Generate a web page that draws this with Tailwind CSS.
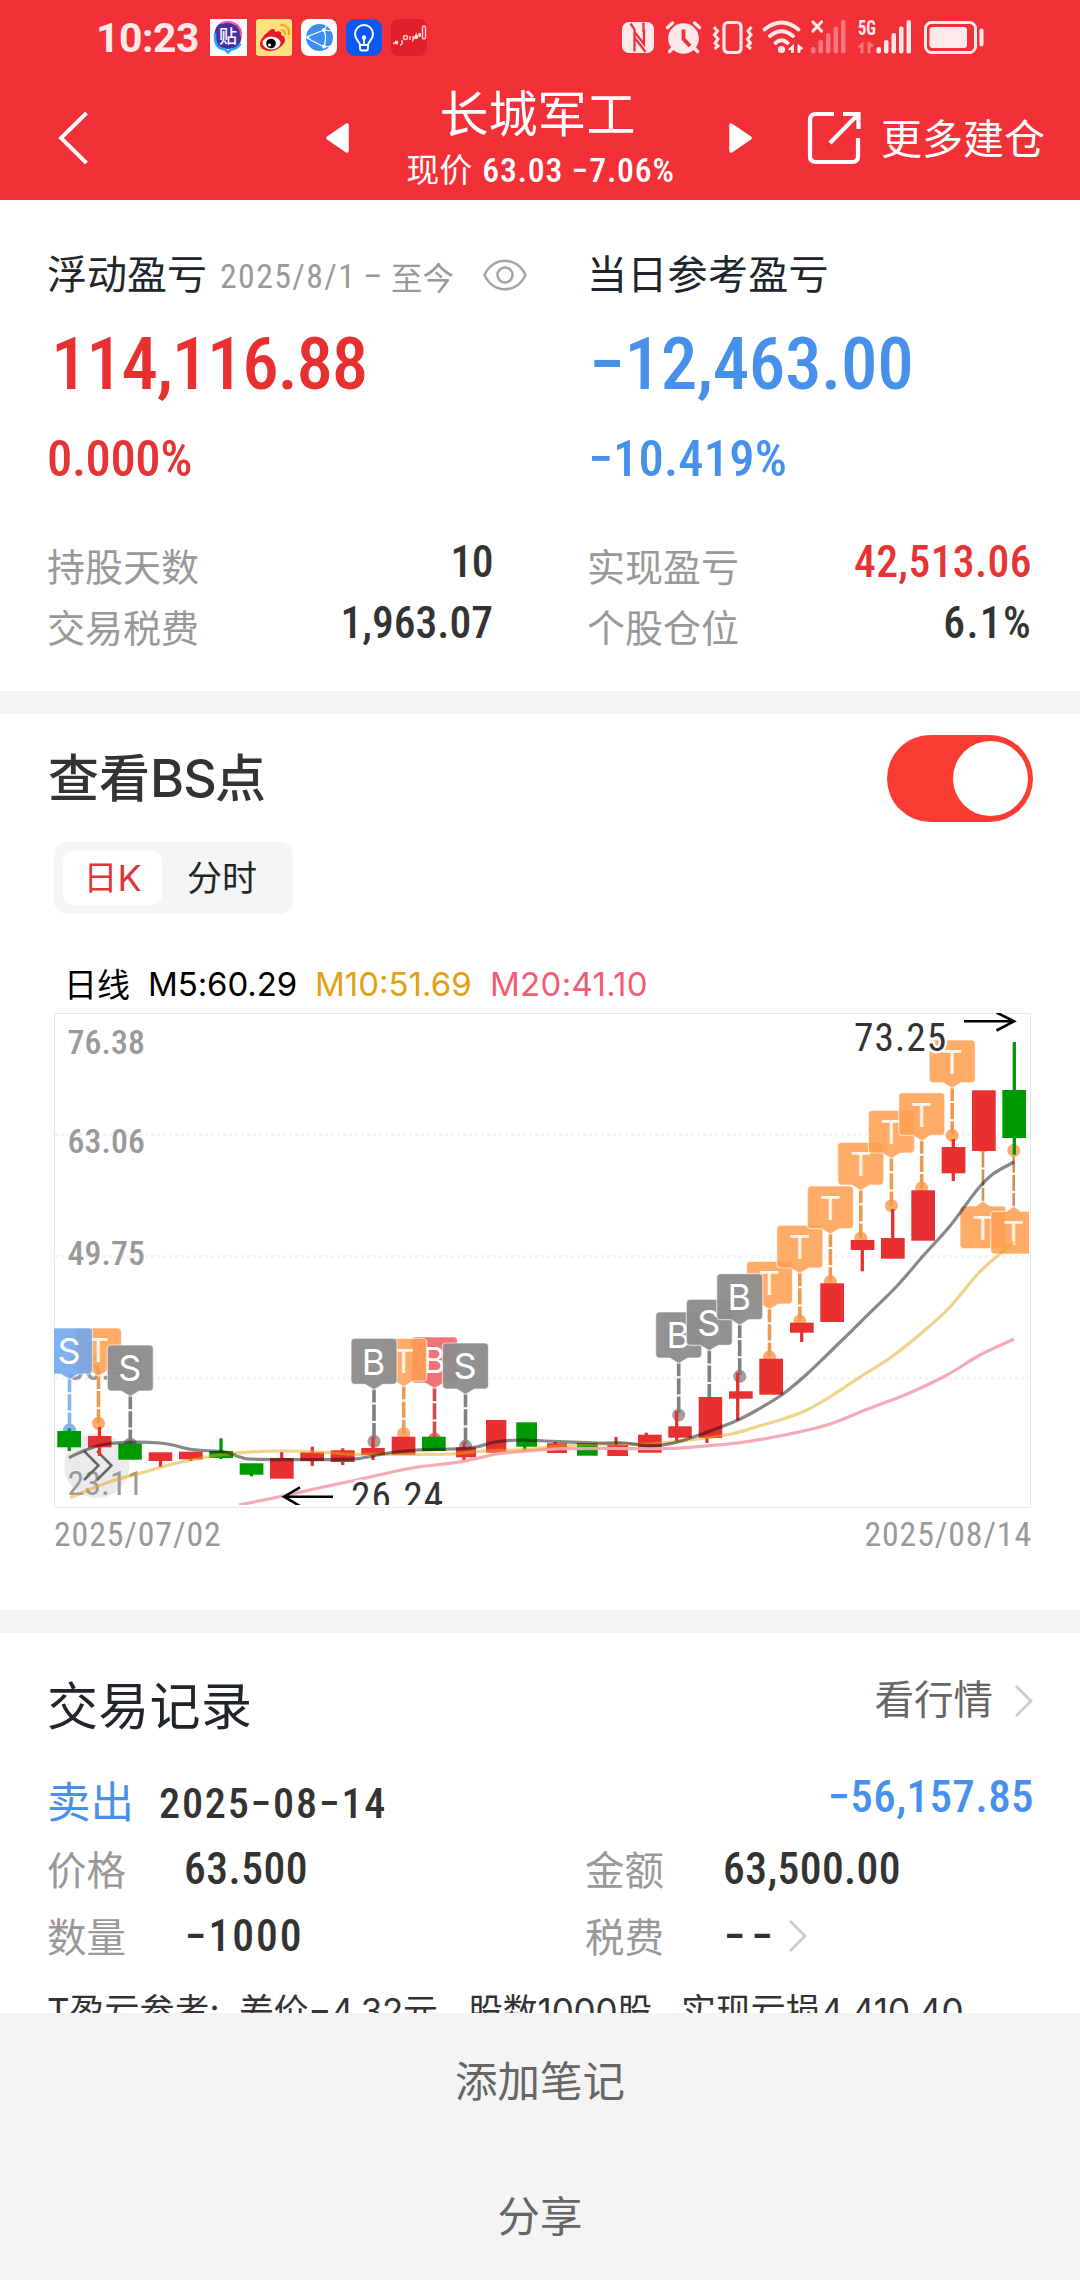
<!DOCTYPE html>
<html lang="zh-CN">
<head>
<meta charset="utf-8">
<title>长城军工</title>
<script src="https://cdn.jsdelivr.net/npm/@tailwindcss/browser@4"></script>
</head>
<body class="w-[1080px] h-[2280px] overflow-hidden bg-white font-['Noto_Sans_CJK_SC',sans-serif] text-[#333333]">
<div class="flex flex-col w-[1080px] h-[2280px] overflow-hidden">

  <!-- header -->
  <header class="h-[200px] shrink-0 bg-[#f13038] text-white">
    <div class="flex h-[75px] items-center pl-[96px] pr-[94px]">
      <span class="h-[75px] leading-[76px] w-[114px] text-[40.8px] font-bold tracking-[-0.4px] font-['Roboto',sans-serif] text-[#ffe8e9]">10:23</span>
      <div class="flex gap-[9px]">
        <svg width="37" height="37" viewBox="0 0 37 37"><rect width="37" height="37" fill="#fff"/><path d="M18 3c9 0 13.500 4 13.500 13.500S27 30 18 30 4.500 26 4.500 16.500 9 3 18 3z" fill="#4a2f9e"/><path d="M5 14v4c0 8 4 12 10 12.500l3 3 3-3c5-.5 8-3 9.500-6" fill="none" stroke="#25a9f5" stroke-width="2.500"/><path d="M11 4.500c6-3 21-2 20 13" fill="none" stroke="#ee5b8f" stroke-width="2"/><text x="18" y="23.500" font-size="18" fill="#fff" text-anchor="middle" font-weight="500">贴</text></svg>
        <svg width="36" height="37" viewBox="0 0 36 37"><rect width="36" height="37" rx="3" fill="#ffe07c"/><path d="M12 13c4-5 8-3 7 0 5-2 7 0 6 3 4 1 5 5 3 8-3 5-9 8-14 8-6 0-10-3-10-7 0-4 4-9 8-12z" fill="#e6162d"/><ellipse cx="15.500" cy="24" rx="9" ry="6.500" fill="#fff"/><circle cx="15" cy="24.500" r="4.800" fill="#000"/><circle cx="13.500" cy="26" r="1.500" fill="#fff"/><path d="M24 6c6-1 10 4 9 10M25 11c3 0 4.500 2 4 5" fill="none" stroke="#f5a623" stroke-width="2.200"/></svg>
        <svg width="36" height="37" viewBox="0 0 36 37"><rect width="36" height="37" rx="8" fill="#fff"/><circle cx="18.500" cy="18.500" r="13.500" fill="#3d8ef0"/><path d="M5 18l18-7 3-5M23 11c2 5 2 11 0 17M6 19l17 9 8-1M23 11l8 1" fill="none" stroke="#fff" stroke-width="1.200"/><circle cx="23" cy="11" r="2" fill="#fff"/><circle cx="23" cy="27.500" r="2" fill="#fff"/><circle cx="7" cy="18.500" r="1.600" fill="#fff"/></svg>
        <svg width="36" height="37" viewBox="0 0 36 37"><rect width="36" height="37" rx="9" fill="#0a58f5"/><path d="M14 26c0-3-5-5-5-11a9 9 0 0 1 18 0c0 6-5 8-5 11z" fill="none" stroke="#fff" stroke-width="2"/><path d="M14 26v3.500q0 2 2 2h4q2 0 2-2V26M18 18v8" fill="none" stroke="#fff" stroke-width="1.800"/><circle cx="18" cy="18.500" r="2.200" fill="#fff"/></svg>
        <svg width="36" height="37" viewBox="0 0 36 37"><rect width="36" height="37" rx="8" fill="#e02129"/><g fill="none" stroke="#ffc9c9" stroke-width="1.500"><path d="M2 24.500l5-2M9 26q3 0 2-5"/><circle cx="14.500" cy="18.500" r="2"/><path d="M19 17v4M22 17v4l3-5v4M28 14v4"/><rect x="31.500" y="7" width="3" height="13" rx="1.500"/></g><path d="M4 23.500h3M24 18h3M28 16h2" stroke="#ffe3e3" stroke-width="3.500"/></svg>
      </div>
      <svg class="ml-auto" width="366" height="38" viewBox="620 18 366 38" fill="none">
        <g fill="#ffe8e9">
          <rect x="622" y="21" width="32" height="31" rx="7"/>
          <path d="M630.500 22.500l4 6v22M634.500 31l9.500 12V28.500M645.500 51l-4-5.500-7-8.500M643.500 21.500V31" fill="none" stroke="#f13038" stroke-width="2.300"/>
          <circle cx="683.500" cy="37.500" r="15.300"/>
          <path d="M667.500 26.500l5-4.500M699.500 26.500l-5-4.500M674 46l-4.500 4.500M693 46l4.500 4.500" stroke="#ffe8e9" stroke-width="3.500" stroke-linecap="round"/>
          <path d="M683.500 28.500V38l6.500 7" fill="none" stroke="#f13038" stroke-width="3.800"/>
          <rect x="724" y="21.500" width="17" height="30" rx="4" fill="none" stroke="#ffe8e9" stroke-width="3.200"/>
          <path d="M714 26l3.500 4-3 4 3.500 4-3 4 3 3-3.500 3M751.500 26l-3.500 4 3 4-3.500 4 3 4-3 3 3.500 3" fill="none" stroke="#ffe8e9" stroke-width="3"/>
          <path d="M764.500 28.500q17-14 34 0M770 35q11.500-9.500 23 0M775.500 42q6-5.500 12 0" fill="none" stroke="#ffe8e9" stroke-width="3.800" stroke-linecap="round"/>
          <circle cx="781.500" cy="48.500" r="3.600"/>
          <path d="M793.500 43.500v8h-2v-3h-3zM798 43.500v8h2v-3l3-1z" stroke="#ffe8e9" stroke-width="1"/>
          <path d="M813 21l8.500 9M821.500 21l-8.500 9" stroke="#ffe8e9" stroke-width="3.200" stroke-linecap="round"/>
          <g fill="#f8777d"><rect x="811" y="46" width="4.500" height="6.500" rx="2"/><rect x="818.500" y="39" width="4.500" height="13.500" rx="2"/><rect x="826" y="32" width="4.500" height="20.500" rx="2"/><rect x="833.500" y="25.500" width="4.500" height="27" rx="2"/><rect x="841" y="19" width="4.500" height="33.500" rx="2"/><path d="M863 41v11h-2v-6h-3zM868 41v11h2v-5l3.500-3z" stroke="#f8777d"/></g>
          <text x="858" y="33.500" font-family="Roboto Condensed" font-weight="700" font-size="20" textLength="18" lengthAdjust="spacingAndGlyphs">5G</text>
          <rect x="876.500" y="46" width="4.500" height="6.500" rx="2"/><rect x="884" y="39" width="4.500" height="13.500" rx="2"/><rect x="891.500" y="32" width="4.500" height="20.500" rx="2"/><rect x="899" y="25.500" width="4.500" height="27" rx="2"/><rect x="906.500" y="19" width="4.500" height="33.500" rx="2"/>
          <rect x="925.500" y="21.500" width="50" height="30" rx="6" fill="none" stroke="#ffe8e9" stroke-width="3"/>
          <rect x="929.500" y="26" width="37.500" height="21" rx="3"/>
          <path d="M981.500 29.500v14" stroke="#ffe8e9" stroke-width="4" stroke-linecap="round"/>
        </g>
      </svg>
    </div>
    <div class="flex h-[125px] items-center pl-[58px]">
      <svg width="30" height="54" viewBox="0 0 30 54" fill="none" stroke="#fff" stroke-width="3.900"><path d="M28.500 2L3 27l25.500 25"/></svg>
      <svg class="ml-[238px]" width="23" height="30" viewBox="0 0 23 30"><path d="M21 2v26L2 15z" fill="#fff" stroke="#fff" stroke-width="3.500" stroke-linejoin="round"/></svg>
      <div class="flex w-[380px] h-[125px] flex-col items-center pt-[6px]">
        <h1 class="mr-[3px] h-[60px] text-[49px] leading-[60px]">长城军工</h1>
        <div class="flex h-[58px] pl-[3px]">
          <span class="w-[76px] text-[33px] leading-[54px]">现价</span>
          <span class="font-['Roboto_Condensed','Roboto',sans-serif] text-[33.8px] font-medium leading-[59px] tracking-[0.8px]">63.03 −7.06%</span>
        </div>
      </div>
      <svg width="23" height="30" viewBox="0 0 23 30"><path d="M2 2v26L21 15z" fill="#fff" stroke="#fff" stroke-width="3.500" stroke-linejoin="round"/></svg>
      <svg class="ml-[55px]" width="54" height="54" viewBox="0 0 54 54" fill="none" stroke="#fff" stroke-width="4.200"><path d="M27 3H9Q3 3 3 9v36q0 6 6 6h36q6 0 6-6V27M36 3h15.500v15M23 32L51 3.500"/></svg>
      <span class="ml-[20px] whitespace-nowrap text-[41px] leading-[56px] -mt-[4px]">更多建仓</span>
    </div>
  </header>

  <!-- profit summary -->
  <section class="grid h-[491px] shrink-0 grid-cols-[540px_1fr] pt-[42px] pl-[47px]">
    <div class="w-[446px]">
      <div class="flex h-[60px] items-center whitespace-nowrap text-[#999999]">
        <span class="w-[173px] shrink-0 text-[40px] leading-[60px] text-[#20252b]">浮动盈亏</span>
        <span class="mt-[10px] w-[143px] shrink-0 font-['Roboto_Condensed','Roboto',sans-serif] text-[33.8px] leading-[60px] tracking-[1.4px]">2025/8/1</span>
        <span class="mt-[10px] w-[28px] shrink-0 font-['Roboto_Condensed','Roboto',sans-serif] text-[33.8px] leading-[60px]">–</span>
        <span class="mt-[8px] w-[64px] shrink-0 text-[31.500px] leading-[60px]">至今</span>
        <svg class="ml-[28px] mt-[6px] shrink-0" width="44" height="32" viewBox="0 0 44 32" fill="none" stroke="#a3a3a3" stroke-width="2.500"><path d="M1.500 16C10-3 34-3 42.500 16 34 35 10 35 1.500 16z"/><circle cx="22" cy="16" r="7.500"/></svg>
      </div>
      <div class="h-[120px] pl-[4px] font-['Roboto_Condensed','Roboto',sans-serif] text-[73.1px] font-medium leading-[124px] tracking-[-1.3px] text-[#e93030]">114,116.88</div>
      <div class="h-[70px] font-['Roboto_Condensed','Roboto',sans-serif] text-[50.6px] font-medium leading-[73px] tracking-[-0.4px] text-[#e43434]">0.000%</div>
      <div class="mt-[42px] flex h-[61px] justify-between">
        <span class="text-[38px] leading-[61px] text-[#999999]">持股天数</span>
        <span class="h-[53px] font-['Roboto_Condensed','Roboto',sans-serif] text-[43.6px] font-medium leading-[57px] tracking-[-0.5px]">10</span>
      </div>
      <div class="flex h-[61px] justify-between">
        <span class="text-[38px] leading-[61px] text-[#999999]">交易税费</span>
        <span class="h-[53px] font-['Roboto_Condensed','Roboto',sans-serif] text-[43.6px] font-medium leading-[57px]">1,963.07</span>
      </div>
    </div>
    <div class="w-[445px]">
      <div class="h-[60px] text-[40px] leading-[60px] tracking-[0.3px] text-[#20252b]">当日参考盈亏</div>
      <div class="h-[120px] pl-[2px] font-['Roboto_Condensed','Roboto',sans-serif] text-[73.1px] font-medium leading-[124px] tracking-[-0.4px] text-[#4791ec]">−12,463.00</div>
      <div class="h-[70px] pl-[1px] font-['Roboto_Condensed','Roboto',sans-serif] text-[50.6px] font-medium leading-[73px] tracking-[0.2px] text-[#4791ec]">−10.419%</div>
      <div class="mt-[42px] flex h-[61px] justify-between">
        <span class="text-[38px] leading-[61px] text-[#999999]">实现盈亏</span>
        <span class="h-[53px] font-['Roboto_Condensed','Roboto',sans-serif] text-[43.6px] font-medium leading-[57px] tracking-[0.4px] text-[#e43434]">42,513.06</span>
      </div>
      <div class="flex h-[61px] justify-between">
        <span class="text-[38px] leading-[61px] text-[#999999]">个股仓位</span>
        <span class="h-[53px] font-['Roboto_Condensed','Roboto',sans-serif] text-[43.6px] font-medium leading-[57px] tracking-[1.3px]">6.1%</span>
      </div>
    </div>
  </section>

  <div class="h-[23px] shrink-0 bg-[#f4f4f4]"></div>

  <!-- BS points chart -->
  <section class="h-[896px] shrink-0 pt-[21px]">
    <div class="flex h-[87px] items-center justify-between pl-[48px] pr-[47px]">
      <h2 class="flex text-[51px] font-medium leading-[80px]"><span class="-mt-[3px]">查看</span><span class="mt-[1px] w-[65px] font-['Inter',sans-serif] text-[52px] tracking-[-1px]">BS</span><span class="-mt-[3px]">点</span></h2>
      <div class="flex h-[87px] w-[146px] items-center justify-end rounded-full bg-[#fb3c32] pr-[5px]"><div class="size-[75px] rounded-full bg-white"></div></div>
    </div>
    <div class="mt-[20px] ml-[54px] flex h-[72px] w-[239px] items-center rounded-[13px] bg-[#f5f5f5] pl-[9px]">
      <div class="flex h-[54px] w-[99px] justify-center rounded-[10px] bg-white text-[34px] leading-[50px] text-[#dd3636]"><span>日</span><span class="font-['Inter',sans-serif] text-[36px] leading-[54px]">K</span></div>
      <span class="ml-[25px] -mt-[4px] text-[35px] text-[#20252b]">分时</span>
    </div>
    <div class="mt-[40px] flex h-[60px] pl-[64px] text-[33px] leading-[60px] text-black">
      <span class="-mt-[1px] w-[84px]">日线</span>
      <span class="w-[167px] font-['Inter',sans-serif] leading-[61px] tracking-[-0.1px]">M5:60.29</span>
      <span class="w-[175px] font-['Inter',sans-serif] leading-[61px] text-[#e3a012]">M10:51.69</span>
      <span class="font-['Inter',sans-serif] leading-[61px] tracking-[0.3px] text-[#ee5f74]">M20:41.10</span>
    </div>
    <svg id="chart" class="-mt-px ml-[54px] block" width="977" height="495" viewBox="54 1013 977 495" fill="none"></svg>
    <div class="flex h-[52px] justify-between pl-[54px] pr-[48px] font-['Roboto_Condensed','Roboto',sans-serif] text-[33.8px] leading-[54px] tracking-[0.9px] text-[#999999] font-[450]"><span>2025/07/02</span><span>2025/08/14</span></div>
  </section>

  <div class="h-[23px] shrink-0 bg-[#f4f4f4]"></div>

  <!-- trade records -->
  <section class="h-[380px] shrink-0 overflow-hidden pt-[30px] pl-[47px]">
    <div class="flex h-[80px] items-center pr-[47px]">
      <h2 class="text-[51px] leading-[80px] tracking-[0.3px] text-[#20252b]">交易记录</h2>
      <span class="ml-auto -mt-[12px] text-[39.5px] text-[#666666]">看行情</span>
      <svg class="ml-[21px] -mt-[4px]" width="19" height="34" viewBox="0 0 19 34" fill="none" stroke="#cccccc" stroke-width="2.800"><path d="M2 2l15 15L2 32"/></svg>
    </div>
    <div class="mt-[20px] flex h-[73px] pr-[46px]">
      <span class="w-[112px] text-[43.5px] leading-[73px] text-[#4791ec]">卖出</span>
      <span class="font-['Roboto_Condensed','Roboto',sans-serif] text-[42.2px] font-medium leading-[82px] tracking-[1.8px]">2025−08−14</span>
      <span class="ml-auto font-['Roboto_Condensed','Roboto',sans-serif] text-[45px] font-medium leading-[68px] tracking-[0.4px] text-[#4791ec]">−56,157.85</span>
    </div>
    <div class="grid h-[67px] grid-cols-[538px_1fr]">
      <div class="flex"><span class="w-[137px] text-[39.5px] leading-[63px] text-[#999999]">价格</span><span class="font-['Roboto_Condensed','Roboto',sans-serif] text-[43.6px] font-medium leading-[68px] tracking-[0.5px]">63.500</span></div>
      <div class="flex"><span class="w-[138px] text-[39.5px] leading-[63px] text-[#999999]">金额</span><span class="font-['Roboto_Condensed','Roboto',sans-serif] text-[43.6px] font-medium leading-[68px] tracking-[0.4px]">63,500.00</span></div>
    </div>
    <div class="grid h-[67px] grid-cols-[538px_1fr]">
      <div class="flex"><span class="w-[138px] text-[39.5px] leading-[64px] text-[#999999]">数量</span><span class="font-['Roboto_Condensed','Roboto',sans-serif] text-[43.6px] font-medium leading-[68px] tracking-[2px]">−1000</span></div>
      <div class="flex"><span class="w-[139px] text-[39.5px] leading-[64px] text-[#999999]">税费</span><span class="w-[64px] font-['Roboto_Condensed','Roboto',sans-serif] text-[43.6px] font-medium leading-[67px] tracking-[6px]">−−</span><svg class="mt-[16px]" width="19" height="34" viewBox="0 0 19 34" fill="none" stroke="#cccccc" stroke-width="2.800"><path d="M2 2l15 15L2 32"/></svg></div>
    </div>
    <div class="mt-[11px] flex whitespace-pre font-['Inter','Noto_Sans_CJK_SC',sans-serif] text-[35px] leading-[60px]"><span class="w-[192px]">T盈亏参考:</span><span class="w-[229px] tracking-[-0.4px]">差价<span class="inline-block -translate-y-[3px]">−</span>4.32元</span><span class="w-[213px] tracking-[-0.2px]">股数1000股</span><span class="tracking-[-0.1px]">实现亏损4,410.40</span></div>
  </section>

  <!-- bottom actions -->
  <footer class="grid flex-1 grid-rows-[134px_133px] bg-[#f4f4f4] text-center text-[42.5px] text-[#666666]">
    <div class="leading-[132px]">添加笔记</div>
    <div class="leading-[134px]">分享</div>
  </footer>
</div>

<script>
const RED = '#e83030', GREEN = '#009900';
// colour, body left, body width, body top, body bottom, wick x, wick top, wick bottom
const candles = [
  [GREEN,57.3,23.7,1431,1447.3,69.3,1428.3,1451],[RED,88,23.5,1436,1447.3,99.5,1427,1456],
  [GREEN,118.3,23.5,1443.7,1459.7],[RED,148.7,23.5,1452.3,1461,160.5,1460,1467],
  [RED,179,23.7,1451.7,1459.3,190.8,1453,1461],[GREEN,209.3,23.7,1451,1458,221,1438.3,1459],
  [GREEN,239.7,23.7,1463.3,1474.7,251.4,1470,1476.3],[RED,270,23.7,1458,1478.7,281.7,1452,1460],
  [RED,300.3,23.7,1452.3,1461,312.3,1446.7,1466],[RED,330.7,24,1450.3,1462,342.7,1448.3,1465],
  [RED,361.3,23.5,1448,1455,373,1437.3,1460],[RED,391.7,23.7,1436.7,1454.7],
  [GREEN,422,23.7,1436.7,1451],[RED,456,20,1447.3,1457.3,464,1442.3,1460.7],
  [RED,486,20.3,1420,1452.7],[GREEN,516.3,20.7,1422.3,1446.7,524.7,1440,1451.3],
  [RED,547,20,1443.3,1453,555.3,1442,1446],[GREEN,577,20.7,1443,1455.7],
  [RED,607.3,20.7,1445,1456,616,1437,1450],[RED,638,23.7,1434.7,1452.7,646.3,1432.7,1440],
  [RED,668.3,23.5,1426.3,1437.7,676.7,1411,1441.3],[RED,698.7,23.5,1397,1438,707,1400,1443],
  [RED,729,23.7,1391.3,1398.7,737.7,1372.7,1420.3],[RED,759.3,23.7,1358.7,1394.7],
  [RED,790,23.7,1322.7,1332.7,801.7,1325,1342],[RED,820.3,23.7,1283.3,1322],
  [RED,850.7,23.7,1240,1250,862.3,1242,1271.3],[RED,881,23.7,1238,1258.7,892.7,1209,1240],
  [RED,911.3,23.7,1190.3,1240.7],[RED,941.7,23.7,1147,1173.3,953.3,1139,1181],
  [RED,972,23.7,1090.3,1151],[GREEN,1002.3,23.7,1090,1138,1014.3,1042,1154.7]
];
// letter, kind, box centre x, box top, dot y, pointing up
const markers = [
  ['T','t',98.5,1328,1423.3],['S','s',69.5,1328,1430],['S','g',130.3,1345,1444],
  ['B','r',434.5,1337,1439],['T','t',403.7,1338.5,1433.5],['B','g',374,1338.3,1441.3],['S','g',465.5,1343,1446],
  ['B','g',678.7,1312,1415],['S','g',709.3,1299.3,1404],
  ['T','t',769.5,1261.3,1357],['B','g',739.7,1273.7,1376.3],
  ['T','t',799.8,1225.3,1321],['T','t',830.4,1186,1281.5],['T','t',860.8,1142.3,1238],
  ['T','t',891.4,1110.3,1205.7],['T','t',921.7,1092.7,1188],['T','t',952.2,1040,1135.3],
  ['T','t',983,1206,1146,true],['T','t',1013.7,1211.3,1150.5,true]
];
const fills = {t:'#ff9e50', g:'#8e8e8e', s:'#6ba5ef', r:'#ee5c60'};
const stems = {t:'#ef9a50', g:'#808080', s:'#84b6f3', r:'#d04a4e'};
const lines = [
  ['#f4a5b1','239,1505 283,1496 323,1487 357,1480 400,1470.3 420,1466.7 463,1461.3 497,1454 530,1450.7 563,1448.7 613,1448.3 663,1448.7 690,1447.3 740,1442.7 783,1435.3 827,1425 867,1409.3 907,1394 947,1375 980,1355 1014,1339'],
  ['#e6a615','70,1497.7 107,1482.7 140,1473.3 173,1464 207,1457 240,1452.7 283,1451 323,1452.3 353,1454.3 400,1454.3 450,1454 480,1451.3 527,1449.3 563,1445.7 613,1444 650,1444 690,1440 730,1434.3 757,1426.7 783,1419 807,1410 833,1395 863,1375 890,1358 923,1331.7 950,1307 980,1271.7 1014,1242'],
  ['#111111','69,1457.7 86,1450 110,1443.500 160,1443 192,1449.5 225,1452 240,1457 258,1459.3 345,1459.3 365,1457.5 388,1453 417,1450 470,1448 495,1442 520,1440 545,1441 600,1443 625,1443 645,1445.5 663,1445 682,1440.7 713,1430 738,1420 757,1410 783,1394 807,1374 833,1349 867,1315.7 897,1286 923,1256 950,1226 977,1190 993,1174 1014,1162']
];
// Catmull-Rom curve through the points
function curve(s) {
  const p = s.split(' ').map(q => q.split(',').map(Number));
  let d = `M${p[0]}`;
  for (let i = 0; i < p.length - 1; i++) {
    const a = p[i-1] || p[i], b = p[i], c = p[i+1], e = p[i+2] || c;
    d += `C${b[0]+(c[0]-a[0])/6},${b[1]+(c[1]-a[1])/6} ${c[0]-(e[0]-b[0])/6},${c[1]-(e[1]-b[1])/6} ${c}`;
  }
  return d;
}
let s = '<clipPath id="plot"><rect x="54" y="1013" width="975" height="492"/></clipPath>';
s += '<rect x="54.500" y="1013.500" width="976" height="494" stroke="#e8e8e8"/>';
for (const y of [1134.5, 1256.5, 1378.3]) s += `<path d="M55 ${y}H1029" stroke="#f3f3f3" stroke-width="3" stroke-dasharray="3 3"/>`;
s += '<circle cx="96.700" cy="1465.700" r="32.500" fill="#ebebeb"/>';
for (const [t, y] of [['76.38',1054],['63.06',1153],['49.75',1265],['36.43',1379.5],['23.11',1495]])
  s += `<text x="67.500" y="${y}" font-family="Roboto Condensed, Roboto" font-weight="${t === '23.11' ? 400 : 500}" font-size="33.8" letter-spacing=".1" fill="#999">${t}</text>`;
s += '<path d="M84 1451l14.500 14.500L84 1480M97 1451l14.500 14.500L97 1480" stroke="#666" stroke-width="2.500"/>';
s += '<g clip-path="url(#plot)">';
for (const [t, k, x, y, dy, up] of markers) {
  const h = k === 't' ? 42.7 : 46, tip = up ? y - 5 : y + h + 5, f = fills[k];
  s += `<circle cx="${x}" cy="${dy}" r="6.500" fill="${f}" fill-opacity=".85"/>`;
  s += `<path d="M${x} ${tip}V${dy}" stroke="${up ? '#d39059' : stems[k]}" stroke-width="${up ? 2.6 : 3.6}" stroke-dasharray="16.300 2" stroke-dashoffset="3"/>`;
  const box = up
    ? `M${x-23} ${y+4}q0-4 4-4h12l7-5 7 5h12q4 0 4 4v${h-8}q0 4-4 4h-38q-4 0-4-4z`
    : `M${x-23} ${y+4}q0-4 4-4h38q4 0 4 4v${h-8}q0 4-4 4h-10l-9 5.500-9-5.500h-10q-4 0-4-4z`;
  s += `<path d="${box}" fill="${f}" fill-opacity="${k === 'g' ? .96 : .86}" stroke="#fff" stroke-opacity=".6" stroke-width="1.200"/>`;
  s += `<text x="${x - (k === 't' ? 0 : .5)}" y="${y + (k === 't' ? 34 : 36.3)}" text-anchor="middle" font-family="Inter" font-weight="400" font-size="${k === 't' ? 33 : 36}" fill="${k === 't' ? '#fff4e6' : '#fff'}">${t}</text>`;
}
for (const [c, x, w, t, b, wx, wt, wb] of candles) {
  s += `<rect x="${x}" y="${t}" width="${w}" height="${b - t}" fill="${c}"/>`;
  if (wx) s += `<path d="M${wx} ${wt}V${wb}" stroke="${c}" stroke-width="3.300"/>`;
}
lines.forEach(([c, p], i) => s += `<path d="${curve(p)}" stroke="${c}" stroke-opacity="${i ? .5 : .95}" stroke-width="3.200"/>`);
s += '<path d="M964 1021.300h50M996.500 1012.500l17.500 8.800-17.500 9.200M333 1496.700h-49M300 1487.300l-16 9.400 16 9.300" stroke="#000" stroke-width="2.600"/>';
for (const [t, x, y] of [['73.25',854,1051],['26.24',351,1509.5]])
  s += `<text x="${x}" y="${y}" font-family="Roboto Condensed, Roboto" font-size="39.4" letter-spacing="1" fill="#333" stroke="#fff" stroke-width="5" paint-order="stroke">${t}</text>`;
document.getElementById('chart').innerHTML = s + '</g>';
</script>
</body>
</html>
